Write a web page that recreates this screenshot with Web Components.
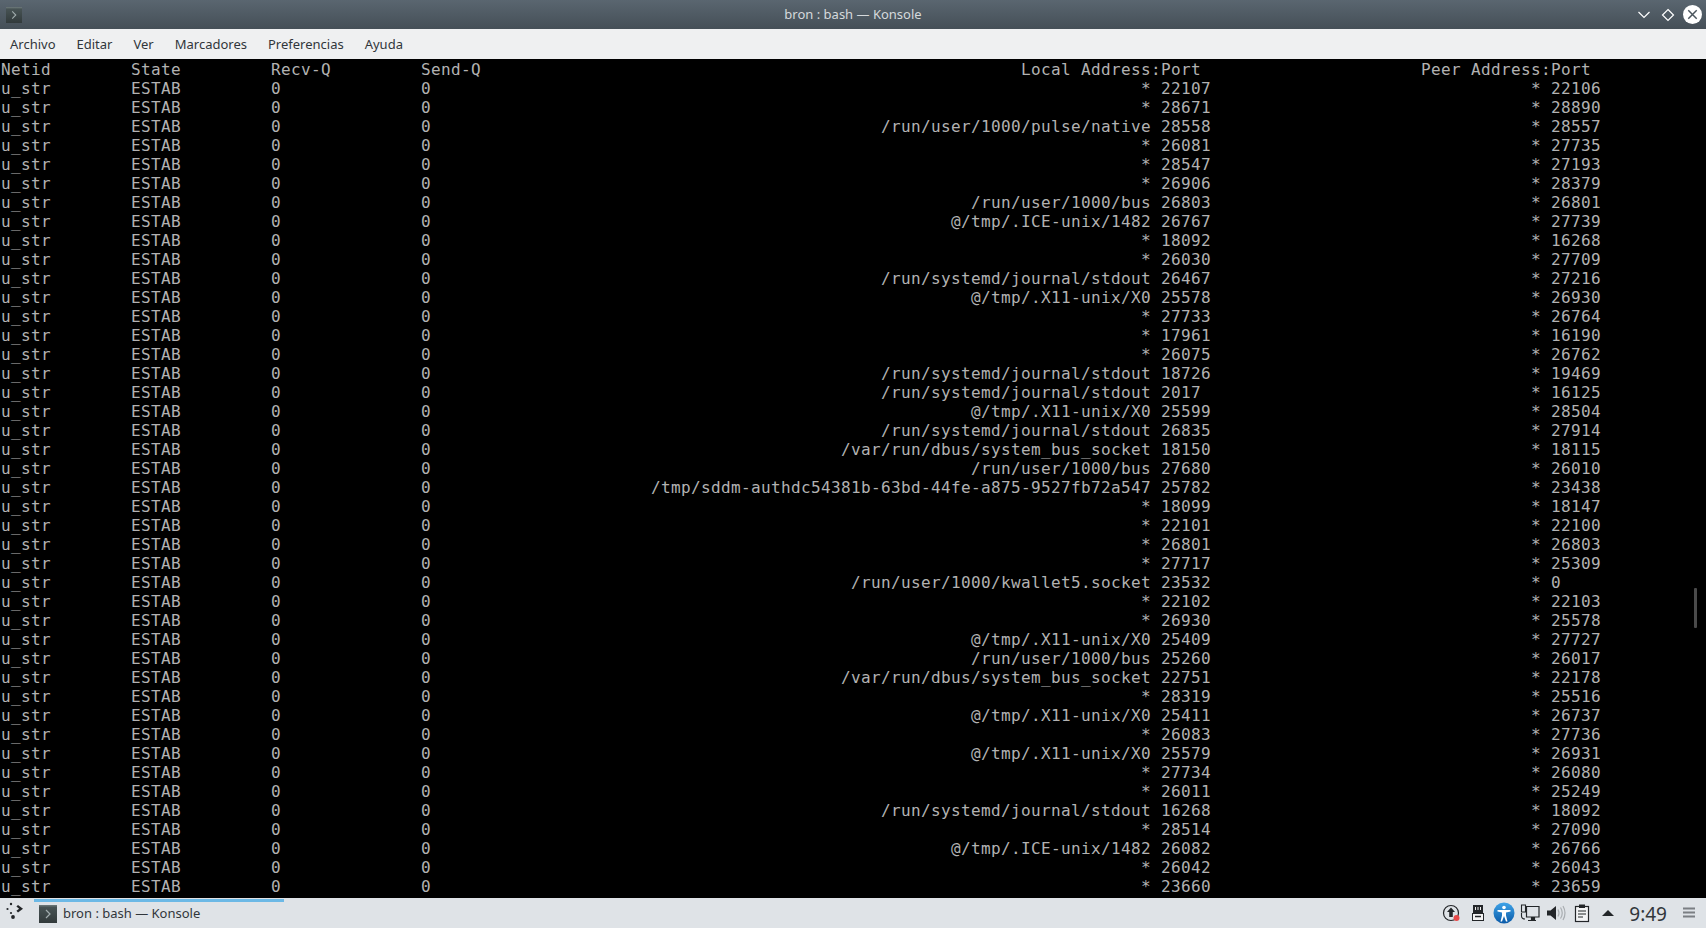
<!DOCTYPE html>
<html lang="es"><head><meta charset="utf-8"><title>bron : bash — Konsole</title>
<style>html,body{margin:0;padding:0;height:100%;overflow:hidden;background:#000}</style></head>
<body><konsole-desktop></konsole-desktop>
<script>
const UI='"Noto Sans","Open Sans",sans-serif';
const termIcon=(s)=>`<svg width="${s}" height="${s}" viewBox="0 0 18 18" style="display:block"><defs><linearGradient id="ti" x1="0" y1="0" x2="0" y2="1"><stop offset="0" stop-color="#4a5657"/><stop offset="1" stop-color="#323a3b"/></linearGradient></defs><rect width="18" height="18" fill="url(#ti)"/><rect width="18" height="1.500" fill="#667273"/><path d="M7 5l4 4-4 4" fill="none" stroke="#a2adae" stroke-width="1.200"/></svg>`;

class TitleBar extends HTMLElement{constructor(){super();this.attachShadow({mode:'open'}).innerHTML=`<style>
:host{display:grid;grid-template-columns:1fr auto 1fr;align-items:center;height:29px;flex:none;background:linear-gradient(#5a6670,#454f57);color:#d5d9dc;font:13px ${UI}}
.ic{margin-left:6px;width:16px;height:16px}
.t{padding-bottom:1px}
.b{display:flex;align-items:center;justify-content:flex-end;gap:6px;padding-right:4px}
svg{display:block}
</style><div class="ic">${termIcon(16)}</div><div class="t"><slot></slot></div><div class="b">
<svg width="18" height="18" viewBox="0 0 18 18"><path d="M3.500 6l5.500 5.500L14.500 6" fill="none" stroke="#fff" stroke-width="1.200"/></svg>
<svg width="18" height="18" viewBox="0 0 18 18"><path d="M9 3.500L14.500 9 9 14.500 3.500 9z" fill="none" stroke="#fff" stroke-width="1.200"/></svg>
<svg width="19" height="19" viewBox="0 0 18 18"><circle cx="9" cy="9" r="9" fill="#fff"/><path d="M5 5l8 8M13 5l-8 8" stroke="#4b555d" stroke-width="1.400"/></svg>
</div>`}}
customElements.define('title-bar',TitleBar);

class MenuBar extends HTMLElement{constructor(){super();this.attachShadow({mode:'open'}).innerHTML=`<style>
:host{display:flex;align-items:center;height:30px;flex:none;background:#eff0f1;color:#31363b;font:13px ${UI};padding-left:10px;gap:21px}
</style><slot></slot>`}}
customElements.define('menu-bar',MenuBar);

class TermView extends HTMLElement{constructor(){super();this.attachShadow({mode:'open'}).innerHTML=`<style>
:host{display:block;flex:1;background:#000;color:#b2b2b2;position:relative;overflow:hidden;font:16px/19px "DejaVu Sans Mono",monospace;letter-spacing:.367px}
#l{padding:1px 0 0 1px}
pre{margin:0;font:inherit;white-space:pre;height:19px}
.sb{position:absolute;right:9px;top:529px;width:3px;height:40px;border-radius:1px;background:#4a4a4a}
</style><div id="l"></div><div class="sb"></div>`;
const X='@/tmp/.X11-unix/X0',J='/run/systemd/journal/stdout',B='/run/user/1000/bus',I='@/tmp/.ICE-unix/1482',D='/var/run/dbus/system_bus_socket';
const rows=[['*',22107,22106],['*',28671,28890],['/run/user/1000/pulse/native',28558,28557],['*',26081,27735],['*',28547,27193],['*',26906,28379],[B,26803,26801],[I,26767,27739],['*',18092,16268],['*',26030,27709],[J,26467,27216],[X,25578,26930],['*',27733,26764],['*',17961,16190],['*',26075,26762],[J,18726,19469],[J,2017,16125],[X,25599,28504],[J,26835,27914],[D,18150,18115],[B,27680,26010],['/tmp/sddm-authdc54381b-63bd-44fe-a875-9527fb72a547',25782,23438],['*',18099,18147],['*',22101,22100],['*',26801,26803],['*',27717,25309],['/run/user/1000/kwallet5.socket',23532,0],['*',22102,22103],['*',26930,25578],[X,25409,27727],[B,25260,26017],[D,22751,22178],['*',28319,25516],[X,25411,26737],['*',26083,27736],[X,25579,26931],['*',27734,26080],['*',26011,25249],[J,16268,18092],['*',28514,27090],[I,26082,26766],['*',26042,26043],['*',23660,23659]];
let out=['Netid'.padEnd(13)+'State'.padEnd(14)+'Recv-Q'.padEnd(15)+'Send-Q'];
out[0]=out[0].padEnd(102)+'Local Address:Port'.padEnd(40)+'Peer Address:Port';
for(const r of rows){let s='u_str'.padEnd(13)+'ESTAB'.padEnd(14)+'0'.padEnd(15)+'0';s=s.padEnd(115-r[0].length)+r[0]+' '+String(r[1]).padEnd(37)+'* '+r[2];out.push(s)}
this.shadowRoot.getElementById('l').innerHTML=out.map(s=>'<pre>'+s+'</pre>').join('')}}
customElements.define('term-view',TermView);

class TaskBar extends HTMLElement{constructor(){super();this.attachShadow({mode:'open'}).innerHTML=`<style>
:host{display:flex;align-items:center;height:30px;flex:none;background:#dfe3e7;color:#31363b;font:13px ${UI};position:relative}
.line{position:absolute;left:34px;top:1px;width:250px;height:3px;background:#6cb9e6}
.k{width:24px;margin-left:4px;margin-right:2px;flex:none}
.task{display:flex;align-items:center;gap:6px;margin-left:9px;flex:1}
.task svg{margin-top:2px}
.tray{display:flex;align-items:center;padding-right:8px}
.tray svg{display:block}
.i{width:26px;display:flex;justify-content:center;flex:none}
.clock{font-size:19px;color:#31363b;margin:0 15px 0 8px;line-height:30px;padding-top:1px}
</style><div class="line"></div>
<div class="k"><svg width="20" height="20" viewBox="0 0 20 20"><g fill="#232629"><circle cx="3.500" cy="8" r="1.100"/><circle cx="7" cy="3" r="1.200"/><path d="M14 4l5 3.700-5 3.700-1.600-1.600 2.700-2.100-2.700-2.100z"/><circle cx="7" cy="12" r="1.100"/><circle cx="9" cy="16" r="1.900"/></g></svg></div>
<div class="task">${termIcon(18)}<slot></slot></div>
<div class="tray">
<div class="i"><svg width="24" height="24" viewBox="0 0 24 24"><circle cx="11" cy="12" r="7.500" fill="none" stroke="#232629" stroke-width="1.200"/><path d="M11 6.500l4 4.500h-2.200v5h-3.600v-5H7z" fill="#232629"/><circle cx="16.500" cy="17" r="3" fill="#e84a4a"/></svg></div>
<div class="i"><svg width="24" height="24" viewBox="0 0 24 24"><path d="M7 4h10v8H7z" fill="#232629"/><path d="M9.500 6v3M12 6v3M14.500 6v3" stroke="#eee" stroke-width="1"/><rect x="6.500" y="12.500" width="11" height="7" fill="#f4f4f4" stroke="#232629"/><path d="M9 15.500h6" stroke="#232629" stroke-width="1.500"/></svg></div>
<div class="i"><svg width="24" height="24" viewBox="0 0 24 24"><defs><linearGradient id="a" x1="0" y1="0" x2="0" y2="1"><stop offset="0" stop-color="#3ea3e8"/><stop offset="1" stop-color="#0a5aa8"/></linearGradient></defs><circle cx="12" cy="12" r="10.500" fill="url(#a)"/><circle cx="12" cy="6.500" r="1.800" fill="#fff"/><path d="M5.500 9h13v1.500l-4.500 1v3l1.500 6h-1.500l-2-5.500-2 5.500h-1.500l1.500-6v-3l-4.500-1z" fill="#fff"/></svg></div>
<div class="i"><svg width="24" height="24" viewBox="0 0 24 24"><path d="M3.500 4h4v7h-4z M7 18c-2 0-3.500-1-3.500-3v-3" fill="none" stroke="#232629" stroke-width="1.100"/><path d="M8.500 5.500H21V16H8.500z" fill="none" stroke="#232629" stroke-width="1.200"/><path d="M10 19.500h8M13.500 16v3h3v-3" fill="#232629" stroke="#232629" stroke-width="1.200"/></svg></div>
<div class="i"><svg width="24" height="24" viewBox="0 0 24 24"><path d="M3 9.500h3.500L12 5v14l-5.500-4.500H3z" fill="#232629"/><path d="M14 8.500q2 3.500 0 7M16.500 6.500q3.500 5.500 0 11M19 5q4 7 0 14" fill="none" stroke="#a9adb1" stroke-width="1.200"/></svg></div>
<div class="i"><svg width="24" height="24" viewBox="0 0 24 24"><rect x="5.500" y="5.500" width="13" height="15" fill="#f3f4f5" stroke="#232629" stroke-width="1.200"/><path d="M9 3.500h6V7H9z" fill="#232629"/><path d="M8 10h8M8 13h8M8 16h5" stroke="#232629" stroke-width="1.200"/></svg></div>
<div class="i"><svg width="24" height="24" viewBox="0 0 24 24"><path d="M6 15l6-6 6 6z" fill="#232629"/></svg></div>
<div class="clock"><slot name="clock"></slot></div>
<svg width="16" height="16" viewBox="0 0 16 16"><path d="M1 3.500h12M1 7.500h12M1 11.500h12" stroke="#7b7f83" stroke-width="2"/></svg>
</div>`}}
customElements.define('task-bar',TaskBar);

class KonsoleDesktop extends HTMLElement{constructor(){super();this.attachShadow({mode:'open'}).innerHTML=`<style>
:host{display:flex;flex-direction:column;width:1706px;height:928px;overflow:hidden}
</style><title-bar>bron : bash — Konsole</title-bar>
<menu-bar><span>Archivo</span><span>Editar</span><span>Ver</span><span>Marcadores</span><span>Preferencias</span><span>Ayuda</span></menu-bar>
<term-view></term-view>
<task-bar>bron : bash — Konsole<span slot="clock">9:49</span></task-bar>`}}
customElements.define('konsole-desktop',KonsoleDesktop);
</script></body></html>
